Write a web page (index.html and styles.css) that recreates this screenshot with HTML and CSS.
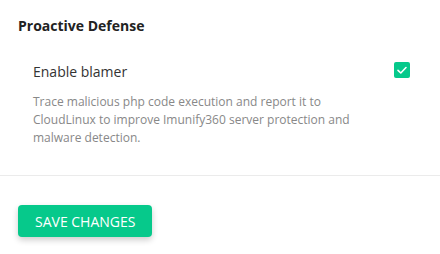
FILE: index.html
```html
<!DOCTYPE html>
<html lang="en">
<head>
    <meta charset="UTF-8">
    <title>Settings</title>
    <link rel="stylesheet" href="styles.css">
</head>
<body>
    <!-- Proactive Defense section -->
    <section class="settings-section">
        <h2 class="section-title">Proactive Defense</h2>
        <div class="option">
            <div class="option-row">
                <label class="option-label" for="blamer">Enable blamer</label>
                <span class="checkbox">
                    <svg width="16" height="16" viewBox="0 0 16 16">
                        <path d="M4 8.3 L6.8 11 L12 5.5" fill="none" stroke="#fff" stroke-width="1.6" stroke-linecap="round" stroke-linejoin="round"/>
                    </svg>
                </span>
            </div>
            <p class="option-desc">Trace malicious php code execution and report it to CloudLinux to improve Imunify360 server protection and malware detection.</p>
        </div>
    </section>
    <div class="actions">
        <button class="save-button">Save changes</button>
    </div>
</body>
</html>
```

FILE: styles.css
```css
body {
    margin: 0;
    font-family: "Open Sans", sans-serif;
    background-color: #fff;
    color: #222;
}
.settings-section {
    padding: 16px 30px 28px 18px;
    border-bottom: 1px solid #ebebeb;
}
.section-title {
    margin: 0;
    font-size: 14px;
    font-weight: 700;
    line-height: 20px;
    color: #222;
}
.option {
    padding-left: 15px;
    margin-top: 26px;
}
.option-row {
    display: flex;
    justify-content: space-between;
    align-items: flex-start;
}
.option-label {
    font-size: 14px;
    line-height: 20px;
    color: #333;
}
.checkbox {
    display: block;
    width: 16px;
    height: 16px;
    border-radius: 2px;
    background-color: #06c98b;
}
.checkbox svg {
    display: block;
}
.option-desc {
    max-width: 340px;
    margin: 11px 0 0;
    font-size: 12px;
    line-height: 18px;
    color: #888;
}
.actions {
    padding: 29px 18px;
}
.save-button {
    height: 32px;
    padding: 0 17px;
    border: none;
    border-radius: 4px;
    background-color: #06c98b;
    color: #fff;
    font-family: "Open Sans", sans-serif;
    font-size: 14px;
    text-transform: uppercase;
    box-shadow: 0 3px 6px rgba(0, 0, 0, 0.2);
    cursor: pointer;
}
```
